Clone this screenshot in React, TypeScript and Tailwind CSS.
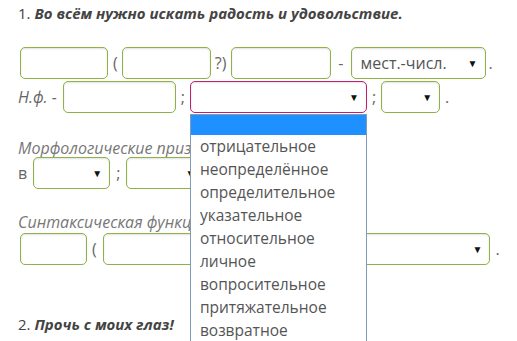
import React from "react";

const font = { fontFamily: '"Open Sans", "Noto Sans", sans-serif' };

function Box({ w, pink }: { w: string; pink?: boolean }) {
  return (
    <div
      className={`${w} h-[32px] shrink-0 rounded-[5px] border bg-white shadow-[inset_0_1px_2px_rgba(0,0,0,0.12)] ${
        pink ? "border-[#c2206f]" : "border-[#8db245]"
      }`}
    />
  );
}

function Sel({ w, text, pink, children }: { w: string; text?: string; pink?: boolean; children?: React.ReactNode }) {
  return (
    <div
      className={`${w} relative h-[32px] shrink-0 rounded-[5px] border bg-white shadow-[inset_0_1px_2px_rgba(0,0,0,0.12)] flex items-center pl-[9px] pr-[7px] ${
        pink ? "border-[#c2206f]" : "border-[#8db245]"
      }`}
    >
      <span className="flex-1 text-[16px] text-[#555]">{text}</span>
      <span className="text-[10px] text-[#111] leading-none">▼</span>
      {children}
    </div>
  );
}

const items = [
  "отрицательное",
  "неопределённое",
  "определительное",
  "указательное",
  "относительное",
  "личное",
  "вопросительное",
  "притяжательное",
  "возвратное",
];

export default function App() {
  return (
    <div style={font} className="w-[517px] h-[341px] overflow-hidden bg-white text-[#555] text-[16px] pl-[18px] relative">
      <div className="pt-[1px] leading-[24px] text-[15px] text-[#444]">
        1. <b className="italic font-bold">Во всём нужно искать радость и удовольствие.</b>
      </div>

      <div className="mt-[22px] flex items-center h-[32px]">
        <div className="ml-[2px]"><Box w="w-[88px]" /></div>
        <span className="ml-[5px] mr-[4px] text-[#666]">(</span>
        <Box w="w-[89px]" />
        <span className="mx-[4px] text-[#666]">?)</span>
        <div className="ml-[1px]"><Box w="w-[100px]" /></div>
        <span className="mx-[7px] text-[#666]">-</span>
        <Sel w="w-[135px]" text="мест.-числ." />
        <span className="ml-[3px] text-[#666]">.</span>
      </div>

      <div className="mt-[2px] flex items-center h-[32px] relative z-10">
        <span className="italic text-[#666]">Н.ф. -</span>
        <div className="ml-[6px]"><Box w="w-[113px]" /></div>
        <span className="mx-[5px] text-[#666]">;</span>
        <Sel w="w-[177px]" pink>
          <div className="absolute left-[-1px] top-[32px] w-[177px] h-[260px] bg-white border border-[#7f9db9] text-[15.5px] text-[#555]">
            <div className="h-[20px] bg-[#1e90ff]" />
            {items.map((it) => (
              <div key={it} className="h-[23px] leading-[23px] pl-[9px]">{it}</div>
            ))}
          </div>
        </Sel>
        <span className="mx-[5px] text-[#666]">;</span>
        <Sel w="w-[59px]" />
        <span className="ml-[5px] text-[#666]">.</span>
      </div>

      <div className="mt-[23px] italic text-[#777] leading-[24px]">Морфологические признаки:</div>
      <div className="mt-[-3px] flex items-center h-[32px]">
        <span className="text-[#666]">в</span>
        <div className="ml-[6px]"><Sel w="w-[77px]" /></div>
        <span className="mx-[6px] text-[#666]">;</span>
        <Sel w="w-[77px]" />
      </div>

      <div className="mt-[21px] italic text-[#777] leading-[24px]">Синтаксическая функция:</div>
      <div className="mt-[-1px] flex items-center h-[32px]">
        <div className="ml-[2px]"><Box w="w-[67px]" /></div>
        <span className="ml-[5px] mr-[6px] text-[#666]">(</span>
        <Box w="w-[100px]" />
        <span className="mx-[4px] text-[#666]">)</span>
        <Sel w="w-[275px]" />
        <span className="ml-[5px] text-[#666]">.</span>
      </div>

      <div className="mt-[47px] leading-[24px] text-[15px] text-[#444]">
        2. <b className="italic font-bold">Прочь с моих глаз!</b>
      </div>
    </div>
  );
}
